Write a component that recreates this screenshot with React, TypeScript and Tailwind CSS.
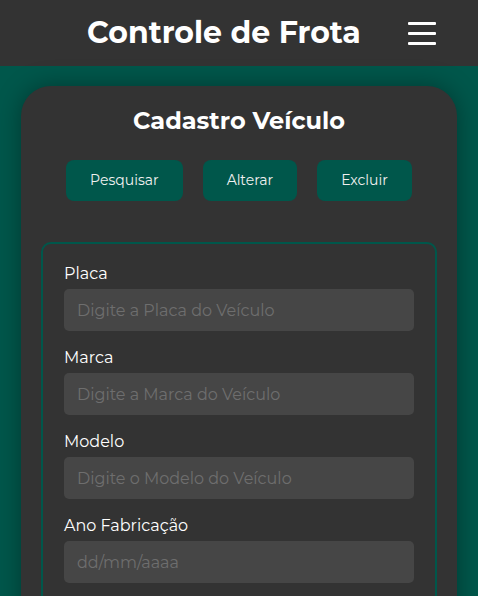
const font = { fontFamily: '"Montserrat", "Open Sans", "DejaVu Sans", sans-serif' };

function Field({ label, placeholder }: { label: string; placeholder: string }) {
  return (
    <div className="flex flex-col mb-[15px]">
      <label className="text-[16px] leading-[24px] text-white mb-[3px]">{label}</label>
      <input
        type="text"
        placeholder={placeholder}
        className="h-[42px] w-full rounded-[5px] bg-[#464646] px-[13px] text-[16px] text-white placeholder:text-[#6e6e6e] outline-none border-none"
      />
    </div>
  );
}

export default function App() {
  const buttons = ['Pesquisar', 'Alterar', 'Excluir'];

  return (
    <div className="min-h-screen bg-[#00574b] overflow-hidden" style={font}>
      {/* Header */}
      <header className="h-[66px] bg-[#333333] flex items-center pr-[42px]">
        <h1 className="flex-1 pl-[40px] text-center text-[30px] font-bold text-white leading-none">
          Controle de Frota
        </h1>
        <button className="w-[28px] flex flex-col gap-[7px]">
          <span className="block h-[3px] w-full bg-white rounded-[1px]"></span>
          <span className="block h-[3px] w-full bg-white rounded-[1px]"></span>
          <span className="block h-[3px] w-full bg-white rounded-[1px]"></span>
        </button>
      </header>

      {/* Card */}
      <main className="px-[21px] pt-[20px]">
        <div className="bg-[#333333] rounded-[30px] px-5 pt-[21px] pb-8 shadow-[0_0_24px_rgba(0,0,0,0.35)]">
          <h2 className="text-center text-[24px] leading-[28px] font-bold text-white">Cadastro Veículo</h2>

          <div className="mt-[25px] flex justify-center gap-5">
            {buttons.map((b) => (
              <button
                key={b}
                className="h-[41px] px-6 rounded-[8px] bg-[#00574b] text-[14px] text-[#f0f0f0]"
              >
                {b}
              </button>
            ))}
          </div>

          <form className="mt-[41px] border-2 border-[#00574b] rounded-[10px] px-[21px] pt-[18px] pb-4">
            <Field label="Placa" placeholder="Digite a Placa do Veículo" />
            <Field label="Marca" placeholder="Digite a Marca do Veículo" />
            <Field label="Modelo" placeholder="Digite o Modelo do Veículo" />
            <Field label="Ano Fabricação" placeholder="dd/mm/aaaa" />
          </form>
        </div>
      </main>
    </div>
  );
}
